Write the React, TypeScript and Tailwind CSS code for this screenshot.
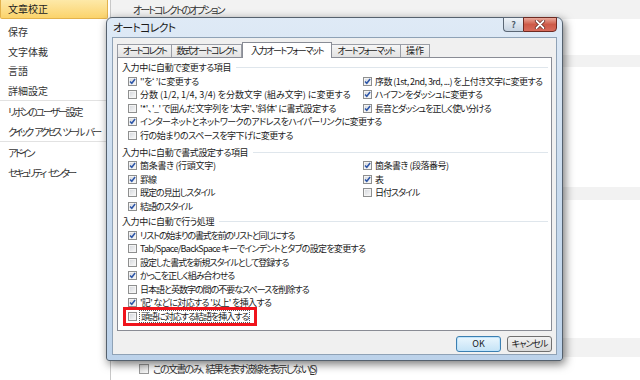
import React from "react";

const FONT =
  "font-['Noto_Sans_CJK_JP','Noto_Sans',sans-serif] [font-feature-settings:'palt']";

function Box({ checked }: { checked: boolean }) {
  return (
    <span className="relative inline-block h-[9px] w-[9px] shrink-0 border border-[#8e8f8f] bg-linear-to-br from-[#d2d5da] to-[#fbfbfb] shadow-[inset_0_0_0_1px_#f4f4f4]">
      {checked && (
        <svg
          className="absolute left-0 top-0"
          width="7"
          height="7"
          viewBox="0 0 7 7"
        >
          <path
            d="M1 3.4 L2.8 5.3 L6.1 1"
            fill="none"
            stroke="#2d56a8"
            strokeWidth="1.5"
          />
        </svg>
      )}
    </span>
  );
}

function Row({ c, t, k = "" }: { c: boolean; t: React.ReactNode; k?: string }) {
  return (
    <div className="flex h-[13.5px] items-center gap-[3px] whitespace-nowrap">
      <Box checked={c} />
      <span className={k}>{t}</span>
    </div>
  );
}

function GroupTitle({ t, className = "" }: { t: string; className?: string }) {
  return (
    <div className={`flex h-[13.5px] items-center gap-[5px] pr-[3px] ${className}`}>
      <span className="whitespace-nowrap tracking-[-0.4px]">{t}</span>
      <div className="h-px flex-1 bg-[#dfe6ec]" />
    </div>
  );
}

function Sidebar() {
  const item = "flex items-center pl-[8px] whitespace-nowrap";
  return (
    <aside className="flex w-[111px] shrink-0 flex-col border-r border-[#c8c8c8] bg-white text-[10px] text-[#333]">
      <div className="mr-[2px] flex h-[19px] items-end rounded-b-[2px] border border-t-0 border-[#e3b24c] bg-linear-to-b from-[#fde9a8] to-[#fbd36a] pb-[2px] pl-[7px] text-[#222]">
        文章校正
      </div>
      <div className="h-[3px]" />
      <div className={`${item} h-[19.5px]`}>保存</div>
      <div className={`${item} h-[19.5px]`}>文字体裁</div>
      <div className={`${item} h-[19.5px]`}>言語</div>
      <div className={`${item} h-[19.5px]`}>詳細設定</div>
      <div className="h-px bg-[#e2e2e2]" />
      <div className={`${item} h-[20px] tracking-[-2.2px]`}>リボンのユーザー設定</div>
      <div className={`${item} h-[20px] gap-[3px] tracking-[-2.8px]`}>
        <span>クイック</span>
        <span>アクセス</span>
        <span>ツール</span>
        <span>バー</span>
      </div>
      <div className="h-px bg-[#e2e2e2]" />
      <div className={`${item} h-[20px] tracking-[-2.5px]`}>アドイン</div>
      <div className={`${item} h-[20px] gap-[3px] tracking-[-2.5px]`}>
        <span>セキュリティ</span>
        <span>センター</span>
      </div>
    </aside>
  );
}

function Tab({
  label,
  w,
  k,
  active,
}: {
  label: string;
  w: string;
  k: string;
  active?: boolean;
}) {
  if (active) {
    return (
      <div
        className={`${w} ${k} relative z-10 -mb-px flex h-[16px] items-center justify-center whitespace-nowrap border border-b-0 border-[#898c95] bg-white`}
      >
        {label}
      </div>
    );
  }
  return (
    <div
      className={`${w} ${k} -ml-px flex h-[13px] items-center justify-center whitespace-nowrap border border-b-0 border-[#9a9da5] bg-linear-to-b from-[#f6f6f6] to-[#e2e2e2] first:ml-0`}
    >
      {label}
    </div>
  );
}

function Dialog() {
  return (
    <div className="absolute left-[106px] top-[17px] flex h-[344px] w-[457px] flex-col rounded-t-[6px] rounded-b-[3px] border border-[#55616e] bg-linear-to-b from-[#dfeaf6] via-[#c9dbee] to-[#bcd2ea] px-[5px] pb-[5px] shadow-[2px_3px_10px_rgba(0,0,0,0.55)]">
      {/* title bar */}
      <div className="relative flex h-[19px] items-center pl-[1px] text-[11px] tracking-[-0.8px] text-[#1b1b1b]">
        オートコレクト
        <div className="absolute right-0 top-[-1px] flex h-[15px] tracking-normal">
          <div className="flex w-[20px] items-center justify-center rounded-bl-[4px] border border-r-0 border-[#5b6775] bg-linear-to-b from-[#eef3f8] to-[#c6d3e1] text-[9px] font-bold leading-none text-[#4f5d6b]">
            ?
          </div>
          <div className="flex w-[34px] items-center justify-center rounded-br-[4px] border border-[#6e2a22] bg-linear-to-b from-[#e9a99c] via-[#cd5a48] to-[#d86c5c]">
            <svg width="12" height="9" viewBox="0 0 12 9">
              <path
                d="M2.5 1 L9.5 8 M9.5 1 L2.5 8"
                stroke="#5a2019"
                strokeWidth="3.2"
                strokeLinecap="round"
              />
              <path
                d="M2.5 1 L9.5 8 M9.5 1 L2.5 8"
                stroke="#ffffff"
                strokeWidth="1.8"
                strokeLinecap="round"
              />
            </svg>
          </div>
        </div>
      </div>
      {/* body */}
      <div className="flex flex-1 flex-col border border-[#8fa2b6] bg-[#f0f0f0] px-[4px] pt-[4px] text-[9px] tracking-[-1px] text-[#1a1a1a]">
        {/* tabs */}
        <div className="flex h-[15px] items-end">
          <Tab label="オートコレクト" w="w-[55px]" k="tracking-[-1.8px]" />
          <Tab label="数式オートコレクト" w="w-[71px]" k="tracking-[-1.5px]" />
          <Tab label="入力オートフォーマット" w="w-[90px]" k="tracking-[-1.4px]" active />
          <Tab label="オートフォーマット" w="w-[70px]" k="tracking-[-1.4px]" />
          <Tab label="操作" w="w-[30px]" k="tracking-[0px]" />
        </div>
        {/* panel */}
        <div className="h-[274px] border border-[#898c95] bg-white pl-[4px] pt-[3px]">
          <GroupTitle t="入力中に自動で変更する項目" />
          <div className="ml-[6px] grid grid-cols-[235px_1fr]">
            <div>
              <Row c t="''を‘ ’に変更する" k="tracking-[-0.4px]" />
              <Row c={false} t="分数 (1/2, 1/4, 3/4) を分数文字 (組み文字) に変更する" k="tracking-[0px]" />
              <Row c={false} t="'*'、'_' で囲んだ文字列を '太字'、'斜体' に書式設定する" k="tracking-[-0.45px]" />
              <Row c t="インターネットとネットワークのアドレスをハイパーリンクに変更する" k="tracking-[-0.55px]" />
              <Row c={false} t="行の始まりのスペースを字下げに変更する" k="tracking-[-0.5px]" />
            </div>
            <div>
              <Row c t="序数 (1st, 2nd, 3rd, ...) を上付き文字に変更する" k="tracking-[-0.55px]" />
              <Row c t="ハイフンをダッシュに変更する" k="tracking-[-0.5px]" />
              <Row c t="長音とダッシュを正しく使い分ける" />
            </div>
          </div>
          <GroupTitle t="入力中に自動で書式設定する項目" className="mt-[3.5px]" />
          <div className="ml-[6px] grid grid-cols-[235px_1fr]">
            <div>
              <Row c t="箇条書き (行頭文字)" k="tracking-[-0.3px]" />
              <Row c t="罫線" />
              <Row c={false} t="既定の見出しスタイル" />
              <Row c t="結語のスタイル" />
            </div>
            <div>
              <Row c t="箇条書き (段落番号)" k="tracking-[-0.5px]" />
              <Row c t="表" />
              <Row c={false} t="日付スタイル" />
            </div>
          </div>
          <GroupTitle t="入力中に自動で行う処理" className="mt-[2px]" />
          <div className="ml-[6px]">
            <Row c t="リストの始まりの書式を前のリストと同じにする" k="tracking-[-1.2px]" />
            <Row c={false} t="Tab/Space/BackSpace キーでインデントとタブの設定を変更する" k="tracking-[-0.7px]" />
            <Row c={false} t="設定した書式を新規スタイルとして登録する" k="tracking-[-1px]" />
            <Row c t="かっこを正しく組み合わせる" />
            <Row c={false} t="日本語と英数字の間の不要なスペースを削除する" />
            <Row c t="'記' などに対応する '以上' を挿入する" k="tracking-[-0.65px]" />
            <div className="relative flex h-[13.5px] items-center gap-[2px] whitespace-nowrap">
              <Box checked={false} />
              <span className="border border-dotted border-[#555] px-px leading-[11px]">
                頭語に対応する結語を挿入する
              </span>
              <div className="absolute left-[-5px] top-[-3px] h-[19px] w-[134px] border-[3px] border-[#f0141c]" />
            </div>
          </div>
        </div>
        {/* buttons */}
        <div className="mt-[5px] flex justify-end gap-[6px]">
          <div className="flex h-[16px] w-[45px] items-center justify-center rounded-[3px] border border-[#3c7fb1] bg-linear-to-b from-[#eaf6fd] to-[#c5e3f6] tracking-normal shadow-[inset_0_0_0_1px_#bfe4fb]">
            OK
          </div>
          <div className="flex h-[16px] w-[45px] items-center justify-center rounded-[3px] border border-[#707070] bg-linear-to-b from-[#f2f2f2] to-[#dadada]">
            キャンセル
          </div>
        </div>
      </div>
    </div>
  );
}

export default function App() {
  return (
    <div className={`relative h-[380px] w-[640px] overflow-hidden bg-white ${FONT}`}>
      <div className="flex h-full">
        <Sidebar />
        <main className="flex flex-1 flex-col text-[10px] text-[#333]">
          <div className="flex h-[19px] items-end whitespace-nowrap bg-[#f2f2f2] pb-[2px] pl-[22px] tracking-[-1.9px]">
            オートコレクトのオプション
          </div>
          <div className="h-[36px]" />
          <div className="h-[12px] bg-[#f2f2f2]" />
          <div className="h-[120px]" />
          <div className="h-[13px] bg-[#f2f2f2]" />
          <div className="h-[138px]" />
          <div className="h-[19px] bg-[#f2f2f2]" />
          <div className="flex h-[23px] items-center gap-[4px] pl-[28px]">
            <span className="inline-block h-[10px] w-[10px] border border-[#9a9a9a] bg-linear-to-br from-[#dcdcdc] to-[#fafafa]" />
            <span className="whitespace-nowrap tracking-[-1.7px]">
              この文書のみ<span className="tracking-normal">、</span>結果を表す波線を表示しない(<u>S</u>)
            </span>
          </div>
        </main>
      </div>
      <Dialog />
    </div>
  );
}
